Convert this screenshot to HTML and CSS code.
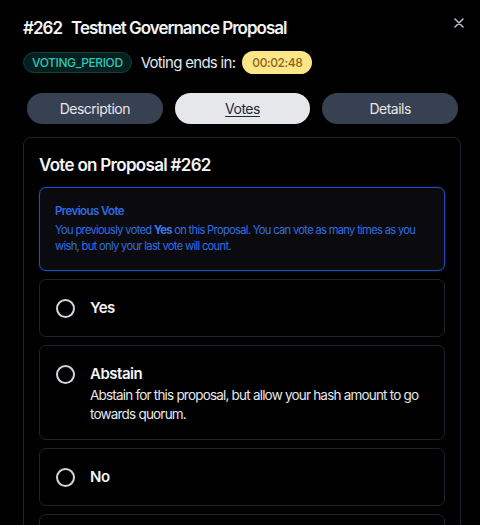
FILE: index.html
```html
<!DOCTYPE html>
<html>
<head>
<meta charset="utf-8">
<link rel="stylesheet" href="styles.css">
</head>
<body>
<div class="modal">
  <button class="close" aria-label="Close">
    <svg width="10" height="10" viewBox="0 0 10 10"><path d="M1 1L9 9M9 1L1 9" stroke="#b8bcc4" stroke-width="1.6" stroke-linecap="round"/></svg>
  </button>
  <h1 class="title"><span class="num">#262</span>Testnet Governance Proposal</h1>
  <div class="status-row">
    <span class="badge">VOTING_PERIOD</span>
    <span class="ends">Voting ends in:</span>
    <span class="timer">00:02:48</span>
  </div>
  <div class="tabs">
    <button class="tab">Description</button>
    <button class="tab active">Votes</button>
    <button class="tab">Details</button>
  </div>
  <div class="card">
    <h2 class="card-title">Vote on Proposal #262</h2>
    <div class="notice">
      <div class="notice-title">Previous Vote</div>
      <p class="notice-text">You previously voted <b>Yes</b> on this Proposal. You can vote as many times as you wish, but only your last vote will count.</p>
    </div>
    <div class="options">
      <label class="option">
        <span class="radio"></span>
        <span class="opt-body"><span class="opt-title">Yes</span></span>
      </label>
      <label class="option">
        <span class="radio"></span>
        <span class="opt-body">
          <span class="opt-title">Abstain</span>
          <span class="opt-desc">Abstain for this proposal, but allow your hash amount to go towards quorum.</span>
        </span>
      </label>
      <label class="option">
        <span class="radio"></span>
        <span class="opt-body"><span class="opt-title">No</span></span>
      </label>
      <label class="option">
        <span class="radio"></span>
        <span class="opt-body"><span class="opt-title">No with Veto</span></span>
      </label>
    </div>
  </div>
</div>
</body>
</html>
```
FILE: styles.css
```css
* { box-sizing: border-box; }
html, body { margin: 0; padding: 0; background: #000; }
body {
  font-family: Inter, "Noto Sans", sans-serif;
  color: #e5e7eb;
  width: 480px;
  height: 525px;
  overflow: hidden;
}
.modal {
  position: relative;
  padding: 16px 19px 0 23px;
}
.close {
  position: absolute;
  top: 15px;
  right: 13px;
  width: 16px;
  height: 16px;
  padding: 0;
  border: 0;
  background: transparent;
  display: flex;
  align-items: center;
  justify-content: center;
}
.title {
  margin: 0;
  font-size: 17px;
  line-height: 24px;
  font-weight: 600;
  letter-spacing: -1px;
  color: #f3f4f6;
}
.title .num { margin-right: 9px; }
.status-row {
  display: flex;
  align-items: center;
  gap: 9px;
  margin-top: 11px;
}
.badge {
  font-size: 12px;
  line-height: 19px;
  padding: 0 8px;
  border: 1px solid #12403d;
  background: #06201f;
  color: #2cc7b5;
  border-radius: 11px;
  letter-spacing: -0.4px;
  font-weight: 500;
}
.ends {
  font-size: 15px;
  color: #e5e7eb;
  letter-spacing: -0.7px;
}
.timer {
  margin-left: -2px;
  font-size: 12px;
  line-height: 23px;
  padding: 0 10px;
  background: #fde68a;
  color: #8a6516;
  border-radius: 12px;
  letter-spacing: -0.4px;
  font-weight: 500;
}
.tabs {
  display: grid;
  grid-template-columns: 1fr 1fr 1fr;
  gap: 12px;
  margin: 19px 3px 0 4px;
}
.tab {
  height: 31px;
  border: 0;
  border-radius: 16px;
  background: #374151;
  color: #e5e7eb;
  font-family: inherit;
  font-size: 14px;
  letter-spacing: -0.5px;
  padding: 0;
}
.tab.active {
  background: #e5e7eb;
  color: #1f2937;
  text-decoration: underline;
  text-underline-offset: 2px;
}
.card {
  margin-top: 13px;
  border: 1px solid #1f242c;
  border-radius: 8px;
  padding: 15px 15px 16px 15px;
  background: #000;
}
.card-title {
  margin: 0;
  font-size: 17px;
  line-height: 24px;
  font-weight: 600;
  letter-spacing: -0.7px;
  color: #f3f4f6;
}
.notice {
  margin-top: 10px;
  border: 1px solid #1e4fb8;
  border-radius: 7px;
  background: #0b0b0f;
  padding: 15px 10px 16px 15px;
  color: #2f6de0;
  box-shadow: 0 0 2px rgba(40,90,220,0.5);
}
.notice-title {
  font-size: 11.5px;
  line-height: 16px;
  font-weight: 600;
  letter-spacing: -0.6px;
  color: #2f6ae0;
}
.notice-text {
  margin: 3px 0 0;
  font-size: 11.2px;
  line-height: 16px;
  letter-spacing: -0.7px;
}
.notice-text b { font-weight: 700; color: #3b7bf0; }
.options {
  display: flex;
  flex-direction: column;
  gap: 8px;
  margin-top: 8px;
}
.option {
  display: flex;
  align-items: flex-start;
  gap: 15px;
  border: 1px solid #1f242c;
  border-radius: 7px;
  padding: 18px 16px 15px 16px;
  background: #000;
  min-height: 58px;
}
.radio {
  flex: none;
  width: 19px;
  height: 19px;
  border: 2px solid #d1d5db;
  border-radius: 50%;
  margin-top: 1px;
}
.opt-body {
  display: flex;
  flex-direction: column;
}
.opt-title {
  font-size: 15px;
  line-height: 20px;
  font-weight: 600;
  letter-spacing: -0.5px;
  color: #f3f4f6;
}
.opt-desc {
  margin-top: 2px;
  font-size: 13.5px;
  line-height: 19px;
  letter-spacing: -0.8px;
  color: #e5e7eb;
}
```
